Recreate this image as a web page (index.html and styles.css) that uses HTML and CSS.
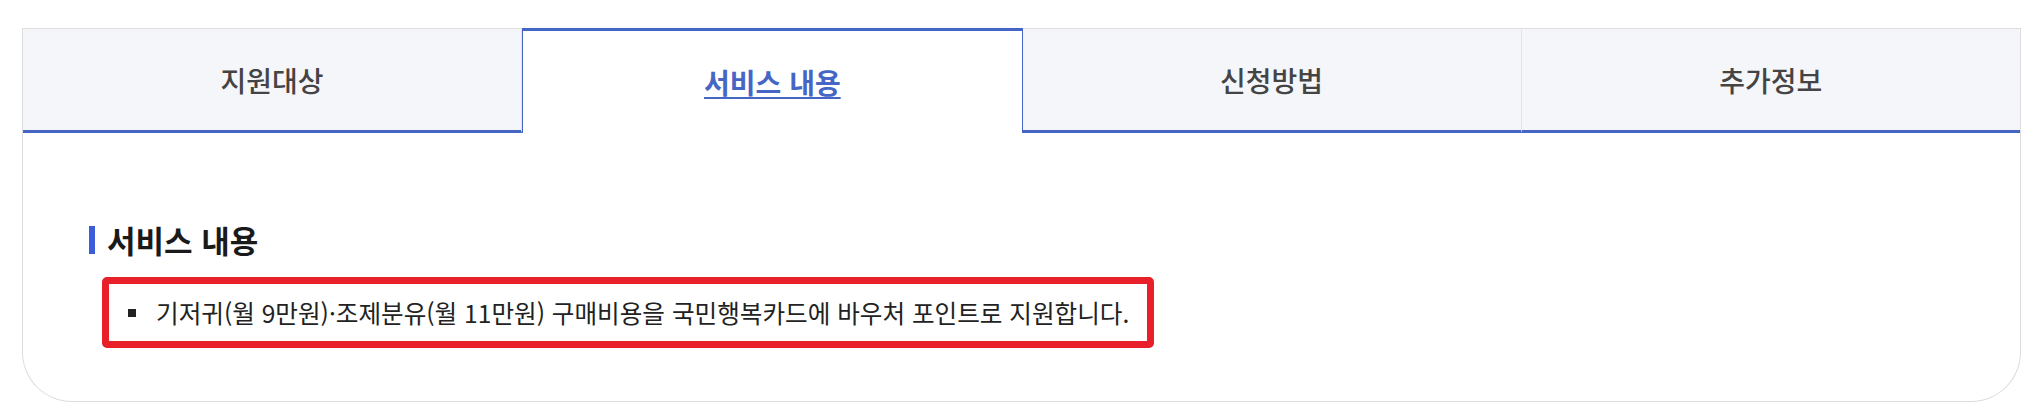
FILE: index.html
```html
<!DOCTYPE html>
<html lang="ko">
    <head>
        <meta charset="UTF-8">
        <meta name="viewport" content="width=device-width, initial-scale=1.0">
        <title>서비스 내용</title>
        <link rel="stylesheet" href="styles.css">
    </head>
    <body>
        <div class="service-box">
            <ul class="tabs">
                <li class="tab">지원대상</li>
                <li class="tab active"><a href="#">서비스 내용</a></li>
                <li class="tab">신청방법</li>
                <li class="tab">추가정보</li>
            </ul>
            <div class="tab-content">
                <h2 class="section-title">서비스 내용</h2>
                <div class="highlight">
                    <ul class="bullet-list">
                        <li>기저귀(월 9만원)·조제분유(월 11만원) 구매비용을 국민행복카드에 바우처 포인트로 지원합니다.</li>
                    </ul>
                </div>
            </div>
        </div>
    </body>
</html>
```

FILE: styles.css
```css
* {
    margin: 0;
    padding: 0;
    box-sizing: border-box;
    font-family: 'Noto Sans CJK KR', 'Noto Sans', sans-serif;
}

body {
    background: #fff;
    color: #222;
}

.service-box {
    margin: 28px 22px 0;
    border: 1px solid #dddddd;
    border-top: 0;
    border-radius: 0 0 50px 50px;
}

.tabs {
    display: flex;
    list-style: none;
}

.tab {
    flex: 1;
    height: 105px;
    display: flex;
    align-items: center;
    justify-content: center;
    background: #f5f6fa;
    border-top: 1px solid #dddddd;
    border-right: 1px solid #e2e4ea;
    border-bottom: 3px solid #4566c4;
    font-size: 28px;
    font-weight: 500;
    color: #444;
}

.tab:last-child {
    border-right: 0;
}

.tab.active {
    background: #fff;
    border-top: 3px solid #4566c4;
    border-left: 1px solid #4566c4;
    border-right: 1px solid #4566c4;
    border-bottom: 0;
}

.tab.active a {
    color: #4566c4;
    font-weight: 700;
    text-decoration: underline;
    text-underline-offset: 3px;
    text-decoration-thickness: 2px;
}

.tab-content {
    padding: 87px 66px 53px;
}

.section-title {
    display: flex;
    align-items: center;
    font-size: 31px;
    font-weight: 700;
    line-height: 39px;
    color: #1a1a1a;
}

.section-title::before {
    content: "";
    width: 6px;
    height: 28px;
    margin-right: 12px;
    background: #3b5ddb;
}

.highlight {
    display: inline-block;
    margin: 18px 0 0 13px;
    padding: 12px 18px 12px 19px;
    border: 7px solid #e8202a;
    border-radius: 5px;
}

.bullet-list {
    list-style: none;
}

.bullet-list li {
    display: flex;
    align-items: center;
    font-size: 24.6px;
    line-height: 33px;
    color: #222;
}

.bullet-list li::before {
    content: "";
    width: 8px;
    height: 8px;
    margin-right: 20px;
    background: #222;
}
```
